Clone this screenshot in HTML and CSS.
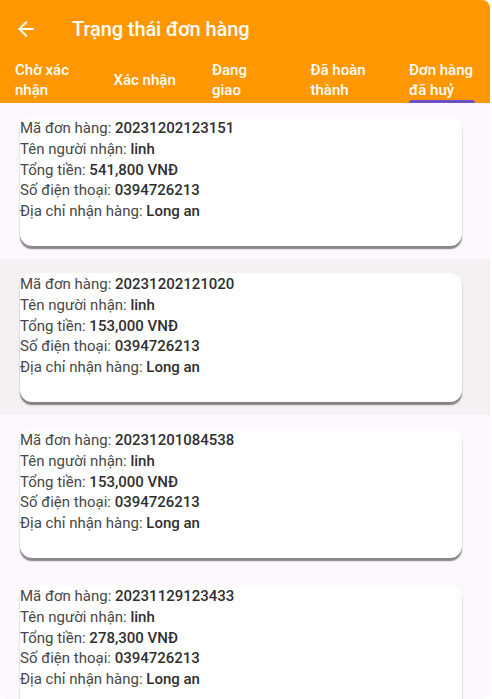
FILE: index.html
```html
<!DOCTYPE html>
<html lang="vi">
<head>
<meta charset="utf-8">
<title>Trạng thái đơn hàng</title>
<link rel="stylesheet" href="styles.css">
</head>
<body>
<div class="screen">
  <header class="header">
    <div class="appbar">
      <svg class="back" viewBox="0 0 24 24" width="24" height="24"><path d="M20 11H7.83l5.59-5.59L12 4l-8 8 8 8 1.41-1.41L7.83 13H20v-2z" fill="#fff"/></svg>
      <h1 class="title">Trạng thái đơn hàng</h1>
    </div>
    <nav class="tabs">
      <div class="tab"><span class="label">Chờ xác<br>nhận</span></div>
      <div class="tab"><span class="label">Xác nhận</span></div>
      <div class="tab"><span class="label">Đang<br>giao</span></div>
      <div class="tab"><span class="label">Đã hoàn<br>thành</span></div>
      <div class="tab active"><span class="label">Đơn hàng<br>đã huỷ</span><span class="indicator"></span></div>
    </nav>
  </header>
  <main class="list">
    <section class="row light">
      <div class="card">
        <p>Mã đơn hàng: <b>20231202123151</b></p>
        <p>Tên người nhận: <b>linh</b></p>
        <p>Tổng tiền: <b>541,800 VNĐ</b></p>
        <p>Số điện thoại: <b>0394726213</b></p>
        <p>Địa chỉ nhận hàng: <b>Long an</b></p>
      </div>
    </section>
    <section class="row grey">
      <div class="card">
        <p>Mã đơn hàng: <b>20231202121020</b></p>
        <p>Tên người nhận: <b>linh</b></p>
        <p>Tổng tiền: <b>153,000 VNĐ</b></p>
        <p>Số điện thoại: <b>0394726213</b></p>
        <p>Địa chỉ nhận hàng: <b>Long an</b></p>
      </div>
    </section>
    <section class="row light">
      <div class="card">
        <p>Mã đơn hàng: <b>20231201084538</b></p>
        <p>Tên người nhận: <b>linh</b></p>
        <p>Tổng tiền: <b>153,000 VNĐ</b></p>
        <p>Số điện thoại: <b>0394726213</b></p>
        <p>Địa chỉ nhận hàng: <b>Long an</b></p>
      </div>
    </section>
    <section class="row light">
      <div class="card">
        <p>Mã đơn hàng: <b>20231129123433</b></p>
        <p>Tên người nhận: <b>linh</b></p>
        <p>Tổng tiền: <b>278,300 VNĐ</b></p>
        <p>Số điện thoại: <b>0394726213</b></p>
        <p>Địa chỉ nhận hàng: <b>Long an</b></p>
      </div>
    </section>
  </main>
</div>
</body>
</html>
```
FILE: styles.css
```css
html, body {
  margin: 0;
  padding: 0;
  background: #ffffff;
}
body {
  font-family: Roboto, "Noto Sans", "Liberation Sans", sans-serif;
}
.screen {
  width: 490px;
  height: 699px;
  overflow: hidden;
  border-radius: 0 8px 8px 8px;
  background: #fdf8fd;
}
.header {
  background: #ff9800;
  height: 103px;
  display: flex;
  flex-direction: column;
}
.appbar {
  height: 57px;
  display: flex;
  align-items: center;
  padding-left: 14px;
  gap: 34px;
}
.back {
  display: block;
  flex: none;
}
.title {
  margin: 0;
  color: #fff;
  font-size: 20px;
  font-weight: 500;
  letter-spacing: -0.1px;
}
.tabs {
  height: 46px;
  display: flex;
}
.tab {
  width: 98.5px;
  flex: none;
  box-sizing: border-box;
  padding-left: 15px;
  display: flex;
  align-items: center;
  color: #fff;
  font-size: 15px;
  font-weight: 500;
  line-height: 20px;
}
.tab.active {
  position: relative;
}
.indicator {
  position: absolute;
  left: 15px;
  bottom: 0;
  width: 66px;
  height: 3px;
  border-radius: 3px 3px 0 0;
  background: #6b4fc6;
}
.list {
  display: flex;
  flex-direction: column;
}
.row {
  height: 156px;
  flex: none;
  box-sizing: border-box;
  padding: 14px 28px 0 20px;
}
.row.light {
  background: #fdf8fd;
}
.row.grey {
  background: #f4f0f4;
}
.card {
  height: 129px;
  box-sizing: border-box;
  padding-top: 1px;
  background: #ffffff;
  border-radius: 12px;
  box-shadow: 0 2.5px 1px rgba(0, 0, 0, 0.4), 0 3px 3px rgba(0, 0, 0, 0.1);
}
.card p {
  margin: 0;
  font-size: 15px;
  line-height: 20.8px;
  color: #474747;
  white-space: nowrap;
}
.card b {
  font-weight: 500;
  color: #2f2f2f;
}
```
